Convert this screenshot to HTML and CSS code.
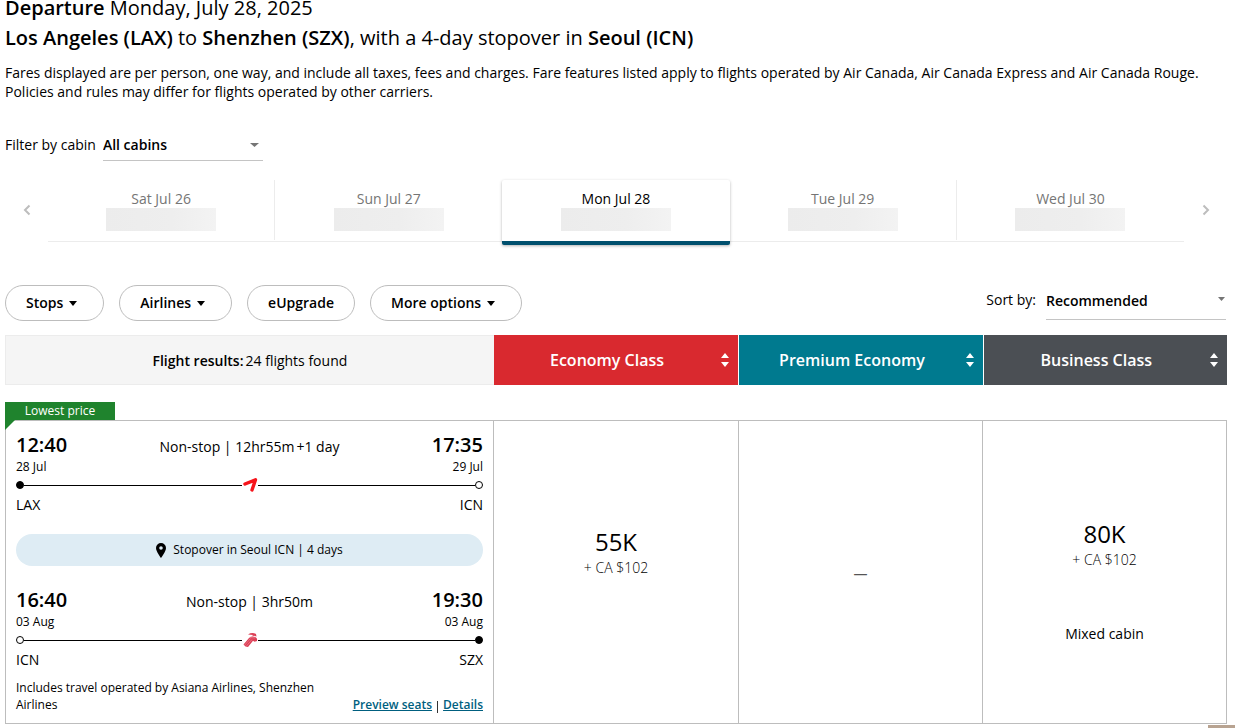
FILE: index.html
```
<!DOCTYPE html>
<html lang="en">
<head>
<meta charset="utf-8">
<meta name="viewport" content="width=device-width, initial-scale=1">
<title>Select departing flight</title>
<link rel="stylesheet" href="styles.css">
</head>
<body>
<main class="page">
  <header class="intro">
    <h1 class="heading"><strong>Departure</strong> Monday, July 28, 2025</h1>
    <h2 class="heading"><strong>Los Angeles (LAX)</strong> to <strong>Shenzhen (SZX)</strong>, with a 4-day stopover in <strong>Seoul (ICN)</strong></h2>
    <p class="disclaimer">Fares displayed are per person, one way, and include all taxes, fees and charges. Fare features listed apply to flights operated by Air Canada, Air Canada Express and Air Canada Rouge. Policies and rules may differ for flights operated by other carriers.</p>
  </header>

  <div class="field cabin">
    <label for="cabin">Filter by cabin</label>
    <span class="select-wrap cabin-select">
      <select id="cabin"><option>All cabins</option></select>
      <svg class="select-arrow" width="9" height="4" viewBox="0 0 9 4"><path d="M0 0h9L4.500 4z"/></svg>
    </span>
  </div>

  <nav class="dates" aria-label="Departure date">
    <button class="date-nav" aria-label="Previous dates"><svg width="8" height="12" viewBox="0 0 8 12"><path d="M6.500 1.500L2 6l4.500 4.500"/></svg></button>
    <div class="date-list">
      <button class="date"><span>Sat Jul 26</span><span class="skeleton"></span></button>
      <button class="date"><span>Sun Jul 27</span><span class="skeleton"></span></button>
      <button class="date selected" aria-current="date"><span>Mon Jul 28</span><span class="skeleton"></span></button>
      <button class="date"><span>Tue Jul 29</span><span class="skeleton"></span></button>
      <button class="date"><span>Wed Jul 30</span><span class="skeleton"></span></button>
    </div>
    <button class="date-nav" aria-label="Next dates"><svg width="8" height="12" viewBox="0 0 8 12"><path d="M1.500 1.500L6 6l-4.500 4.500"/></svg></button>
  </nav>

  <div class="toolbar">
    <div class="pills">
      <button class="pill">Stops<svg width="8" height="5" viewBox="0 0 8 5"><path d="M0 0h8L4 5z"/></svg></button>
      <button class="pill">Airlines<svg width="8" height="5" viewBox="0 0 8 5"><path d="M0 0h8L4 5z"/></svg></button>
      <button class="pill">eUpgrade</button>
      <button class="pill">More options<svg width="8" height="5" viewBox="0 0 8 5"><path d="M0 0h8L4 5z"/></svg></button>
    </div>
    <div class="field sort">
      <label for="sort">Sort by:</label>
      <span class="select-wrap sort-select">
        <select id="sort"><option>Recommended</option></select>
        <svg class="select-arrow" width="7" height="4" viewBox="0 0 7 4"><path d="M0 0h7L3.500 4z"/></svg>
      </span>
    </div>
  </div>

  <div class="columns results-head">
    <p class="count"><strong>Flight results:</strong><span>24 flights found</span></p>
    <button class="cabin-head economy"><span>Economy Class</span><svg width="8" height="14" viewBox="0 0 8 14"><path d="M0 5l4-5 4 5zM0 9h8l-4 5z"/></svg></button>
    <button class="cabin-head premium"><span>Premium Economy</span><svg width="8" height="14" viewBox="0 0 8 14"><path d="M0 5l4-5 4 5zM0 9h8l-4 5z"/></svg></button>
    <button class="cabin-head business"><span>Business Class</span><svg width="8" height="14" viewBox="0 0 8 14"><path d="M0 5l4-5 4 5zM0 9h8l-4 5z"/></svg></button>
  </div>

  <article class="result">
    <div class="tag">Lowest price</div>
    <div class="columns result-card">
      <section class="itinerary">
        <div class="segment">
          <div class="row"><span class="time">12:40</span><span class="duration">Non-stop | 12hr55m<span class="plus-day">+1 day</span></span><span class="time">17:35</span></div>
          <div class="row small"><span>28 Jul</span><span>29 Jul</span></div>
          <div class="track">
            <span class="dot filled"></span><span class="rail"></span>
            <svg class="carrier" width="16" height="16" viewBox="0 0 16 16"><path d="M3 7L13.500 2.800L10 13" fill="none" stroke="#f6141b" stroke-width="3.400" stroke-linecap="round" stroke-linejoin="round"/></svg>
            <span class="rail"></span><span class="dot"></span>
          </div>
          <div class="row codes"><span>LAX</span><span>ICN</span></div>
        </div>

        <p class="stopover"><svg width="10" height="15" viewBox="0 0 10 15"><path fill-rule="evenodd" d="M5 0a5 5 0 0 0-5 5c0 3.500 5 10 5 10s5-6.500 5-10a5 5 0 0 0-5-5zm0 3.200a1.800 1.800 0 1 1 0 3.600 1.800 1.800 0 0 1 0-3.600z"/></svg><span>Stopover in Seoul ICN | 4 days</span></p>

        <div class="segment">
          <div class="row"><span class="time">16:40</span><span class="duration">Non-stop | 3hr50m</span><span class="time">19:30</span></div>
          <div class="row small"><span>03 Aug</span><span>03 Aug</span></div>
          <div class="track">
            <span class="dot"></span><span class="rail"></span>
            <svg class="carrier" width="16" height="16" viewBox="0 0 16 16"><g fill="#dc3f56"><path d="M1.500 12.500L7 6q3-2.500 7-.5 1.500 1 1 3.500l-2.500.8-1.500-1L6 15 3.500 14.500z"/><path d="M6 2.500q4-2.500 8-.5l.5 2.500-2.500-.8-2 .6 1-1.300z"/></g><path d="M2.500 13.300L8.500 6.500M4.500 14L10 7.500M8 5.500l5 .5" fill="none" stroke="#f0929f" stroke-width=".6"/></svg>
            <span class="rail"></span><span class="dot filled"></span>
          </div>
          <div class="row codes"><span>ICN</span><span>SZX</span></div>
        </div>

        <footer class="details">
          <p>Includes travel operated by Asiana Airlines, Shenzhen Airlines</p>
          <div class="links"><a href="#seats">Preview seats</a><span class="divider"></span><a href="#details">Details</a></div>
        </footer>
      </section>
      <section class="fare"><span class="price">55K</span><span class="tax">+ CA $102</span></section>
      <section class="fare unavailable"><span>—</span></section>
      <section class="fare fare-mixed"><span class="price">80K</span><span class="tax">+ CA $102</span><span class="mixed">Mixed cabin</span></section>
    </div>
  </article>
</main>
<div class="corner-panel"></div>
</body>
</html>
```
FILE: styles.css
```
* { box-sizing: border-box; }

body {
  margin: 0;
  background: #fff;
  color: #000;
  font: 14px/20px "Open Sans", "Noto Sans", sans-serif;
}

h1, h2, p { margin: 0; }
strong { font-weight: 600; }
button, select { font: inherit; color: inherit; }
button { border: 0; background: none; padding: 0; cursor: pointer; }
svg { display: block; flex: none; }

.page { padding: 0 8px 0 5px; }

.intro { margin-top: -7px; }
.heading { font-size: 20px; line-height: 30px; font-weight: 400; }
.disclaimer { margin-top: 10px; line-height: 19px; }

/* Labelled drop-downs */
.field { display: flex; align-items: center; }
.select-wrap { position: relative; display: block; border-bottom: 1px solid #c4c4c4; }
.select-wrap select {
  display: block;
  width: 100%;
  height: 100%;
  padding: 0;
  border: 0;
  background: none;
  appearance: none;
  font-weight: 600;
}
.select-arrow { position: absolute; right: 4px; top: 50%; margin-top: -2px; fill: #757575; pointer-events: none; }

.cabin { margin-top: 28px; gap: 7px; }
.cabin-select { width: 160px; height: 32px; }

/* Date carousel */
.dates { display: flex; margin-top: 19px; }
.date-nav { display: flex; flex: none; width: 43px; height: 60px; align-items: center; justify-content: center; }
.date-nav path { fill: none; stroke: #bdbdbd; stroke-width: 2; }
.date-list { flex: 1; display: grid; grid-template-columns: repeat(5, 1fr); height: 62px; border-bottom: 1px solid #ececec; }
.date {
  display: flex;
  flex-direction: column;
  align-items: center;
  height: 60px;
  padding-top: 9px;
  line-height: 19px;
  color: #757575;
  border-right: 1px solid #ececec;
}
.date:last-child, .date:has(+ .selected) { border-right: 0; }
.skeleton { width: 110px; height: 23px; background: linear-gradient(90deg, #ececec 0%, #eee 60%, #f3f3f3 100%); }
.date.selected {
  height: 65px;
  color: #000;
  background: #fff;
  border-right: 0;
  border-bottom: 4px solid #00506e;
  border-radius: 2px;
  box-shadow: 0 1px 3px rgba(0, 0, 0, .3);
}

/* Filters and sorting */
.toolbar { display: flex; justify-content: space-between; align-items: flex-start; margin-top: 43px; }
.pills { display: flex; gap: 15px; }
.pill {
  display: flex;
  align-items: center;
  gap: 6px;
  height: 36px;
  padding: 0 20px;
  border: 1px solid #bdbdbd;
  border-radius: 18px;
  font-weight: 600;
}
.pill:has(svg) { padding-right: 26px; }
.sort { gap: 10px; padding-right: 1px; }
.sort label { margin-top: -5px; }
.sort-select { width: 180px; height: 35px; padding-bottom: 3px; }
.sort-select .select-arrow { right: 1px; margin-top: -5px; }

/* Results grid */
.columns { display: grid; grid-template-columns: 2fr 1fr 1fr 1fr; }
.results-head { margin-top: 14px; height: 50px; }
.count { display: flex; align-items: center; justify-content: center; gap: 2px; padding-top: 2px; background: #f5f5f5; border: 1px solid #ececec; border-right: 0; }
.cabin-head {
  display: grid;
  grid-template-columns: 1fr 8px;
  align-items: center;
  padding: 0 9px 0 0;
  color: #fff;
  font-size: 16px;
  font-weight: 600;
}
.cabin-head span { padding-right: 1px; }
.cabin-head svg { fill: #fff; }
.cabin-head + .cabin-head { border-left: 1px solid #fff; }
.economy { background: #d9292f; }
.premium { background: #007a8f; }
.business { background: #4b4f54; }

.result { margin-top: 17px; }
.tag {
  position: relative;
  width: 110px;
  height: 18px;
  color: #fff;
  background: #1f832d;
  font-size: 12px;
  line-height: 18px;
  text-align: center;
}
.tag::after {
  content: "";
  position: absolute;
  left: 0;
  top: 18px;
  border-top: 10px solid #1f832d;
  border-right: 10px solid transparent;
}
.result-card { border: 1px solid #bdbdbd; }

.itinerary { padding: 10px; border-right: 1px solid #bdbdbd; }
.row { display: flex; justify-content: space-between; align-items: center; }
.time { font-size: 20px; line-height: 28px; font-weight: 600; }
.duration { padding-top: 4px; }
.plus-day { margin-left: 2px; }
.small { font-size: 12px; line-height: 16px; }
.track { display: flex; align-items: center; height: 20px; }
.dot { width: 8px; height: 8px; border: 1px solid #000; border-radius: 50%; }
.filled { background: #000; }
.rail { flex: 1; height: 1px; background: #000; }

.stopover {
  display: flex;
  align-items: center;
  justify-content: center;
  gap: 7px;
  height: 32px;
  margin: 19px 0 20px;
  border-radius: 16px;
  background: #deecf4;
  font-size: 12px;
}

.details { display: flex; justify-content: space-between; align-items: flex-end; margin-top: 9px; font-size: 12px; line-height: 17px; }
.details p { flex: 0 1 310px; }
.links { display: flex; align-items: flex-end; gap: 5px; flex: none; }
.links a { color: #005f7f; font-weight: 600; text-underline-offset: 1px; }
.divider { width: 1px; height: 12px; background: #333; }

/* Fare cells */
.fare { display: flex; flex-direction: column; align-items: center; padding-top: 105px; }
.fare + .fare { border-left: 1px solid #bdbdbd; }
.fare-mixed { padding-top: 97px; }
.price { font-size: 24px; line-height: 32px; }
.tax { font-weight: 300; line-height: 20px; }
.mixed { margin-top: 54px; }
.fare.unavailable { padding-top: 3px; justify-content: center; color: #555; }

.corner-panel { position: fixed; right: 0; bottom: 0; width: 27px; height: 3px; background: #b8a391; }
```
